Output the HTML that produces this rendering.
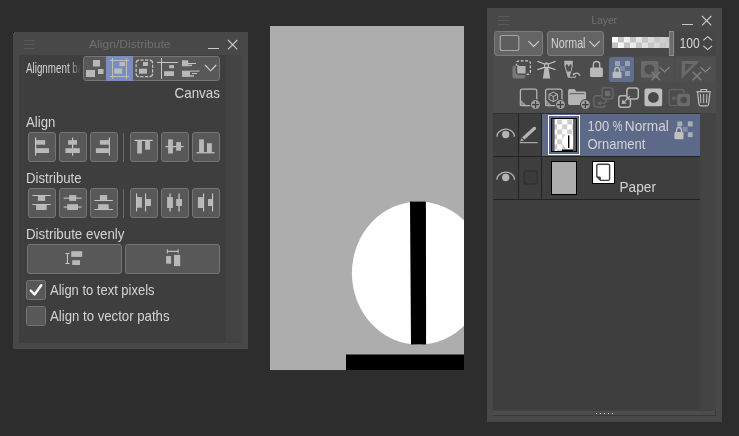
<!DOCTYPE html>
<html lang="en">
<head>
<meta charset="utf-8">
<title>Align/Distribute</title>
<style>
html,body{margin:0;padding:0;background:#2d2d2d;overflow:hidden;}
body{width:739px;height:436px;position:relative;font-family:"Liberation Sans",sans-serif;}
svg{position:absolute;left:0;top:0;display:block;will-change:transform;}
text{font-family:"Liberation Sans",sans-serif;font-size:14.1px;fill:#d4d4d4;}
.ttl{font-size:11.5px;fill:#707070;}
.ic{fill:#b8b8b8;}
.ln{fill:#c6c6c6;}
.btn{fill:#585858;stroke:#757575;stroke-width:1;}
</style>
</head>
<body>
<svg width="739" height="436" viewBox="0 0 739 436">
<defs>
  <pattern id="chk6" x="612" y="37" width="12" height="11" patternUnits="userSpaceOnUse">
    <rect x="0" y="0" width="12" height="11" fill="#c2c2c2"/>
    <rect x="0" y="0" width="6" height="5.5" fill="#ffffff"/>
    <rect x="6" y="5.5" width="6" height="5.5" fill="#ffffff"/>
  </pattern>
  <linearGradient id="opg" x1="0" x2="1" y1="0" y2="0">
    <stop offset="0" stop-color="#c8c8c8" stop-opacity="0"/>
    <stop offset="1" stop-color="#c8c8c8" stop-opacity="0.95"/>
  </linearGradient>
  <pattern id="chk4" x="557.2" y="119.4" width="10" height="10" patternUnits="userSpaceOnUse">
    <rect x="0" y="0" width="10" height="10" fill="#ffffff"/>
    <rect x="0" y="0" width="5" height="5" fill="#cecece"/>
    <rect x="5" y="5" width="5" height="5" fill="#cecece"/>
  </pattern>
  <linearGradient id="fade" x1="0" x2="1" y1="0" y2="0">
    <stop offset="0" stop-color="#3e3e3e" stop-opacity="0"/>
    <stop offset="1" stop-color="#3e3e3e" stop-opacity="1"/>
  </linearGradient>
  <clipPath id="cv"><rect x="270" y="26" width="194" height="344"/></clipPath>
  <clipPath id="th"><rect x="554.6" y="119" width="18.5" height="32"/></clipPath>
</defs>

<!-- ================= ALIGN / DISTRIBUTE PANEL ================= -->
<g id="align-panel">
  <rect x="13" y="32" width="235" height="317" fill="#484848"/>
  <rect x="13" y="32" width="1" height="1" fill="#000000"/>
  <rect x="19" y="55" width="223" height="288" fill="#3e3e3e"/>
  <rect x="226" y="55" width="16" height="287" fill="#434343"/>
  <!-- title bar -->
  <g fill="#5a5a5a"><rect x="24" y="40" width="11" height="1"/><rect x="24" y="44" width="11" height="1"/><rect x="24" y="48" width="11" height="1"/></g>
  <text class="ttl" x="89" y="48" textLength="81.5" lengthAdjust="spacingAndGlyphs">Align/Distribute</text>
  <rect x="208" y="48" width="11" height="1" fill="#c8c8c8"/>
  <path d="M228 40 L237.3 49.3 M237.3 40 L228 49.3" stroke="#c8c8c8" stroke-width="1.1" fill="none"/>

  <!-- alignment base row -->
  <text x="26" y="73" textLength="67.6" lengthAdjust="spacingAndGlyphs" fill="#ececec">Alignment base</text>
  <rect x="69" y="58" width="12" height="22" fill="url(#fade)"/>
  <rect x="81" y="58" width="14" height="22" fill="#3e3e3e"/>
  <rect x="83.5" y="56.5" width="136" height="24" rx="2.5" class="btn"/>
  <rect x="106" y="56" width="27" height="25" fill="#7a8cc0"/>
  <!-- icon 1 -->
  <g class="ic"><rect x="93" y="60" width="7" height="6.5"/><rect x="86" y="70" width="9" height="7"/><rect x="98" y="69" width="5.5" height="5"/></g>
  <!-- icon 2 (selected) -->
  <g fill="#bcbcbc"><rect x="112" y="58" width="1" height="21"/><rect x="126" y="58" width="1" height="21"/><rect x="110" y="60" width="19" height="1"/><rect x="110" y="76" width="19" height="1"/>
    <rect x="119.4" y="62" width="5.6" height="4"/><rect x="114.3" y="68.5" width="7.7" height="5.2"/></g>
  <!-- icon 3 -->
  <rect x="136.1" y="60.2" width="16.5" height="16.5" rx="3" fill="none" stroke="#c6c6c6" stroke-width="1.2" stroke-dasharray="4.71 1.4 3.1 1.5 3.1 1.4" stroke-dashoffset="4.71"/>
  <g class="ic"><rect x="143" y="62" width="5" height="4"/><rect x="139" y="68.7" width="8" height="5"/></g>
  <!-- icon 4 -->
  <g class="ln"><rect x="161" y="58" width="1" height="21"/><rect x="157" y="62" width="21" height="1"/></g>
  <g class="ic"><rect x="169.2" y="65.1" width="4.8" height="3.1"/><rect x="164.1" y="71.2" width="9.9" height="4.8"/></g>
  <!-- icon 5 -->
  <g class="ic"><rect x="182" y="60.3" width="6.2" height="5.8"/><rect x="182" y="64.6" width="10" height="1.6"/><rect x="182" y="70.7" width="8" height="6"/><rect x="182" y="75.2" width="12" height="1.5"/></g>
  <g class="ln"><rect x="188" y="63" width="8" height="1"/><rect x="190" y="70.6" width="9.5" height="1"/><rect x="192" y="73" width="5" height="1"/></g>
  <!-- chevron -->
  <path d="M205 65 L210.6 70.8 L216.2 65" stroke="#d0d0d0" stroke-width="1.1" fill="none"/>

  <text x="220" y="98" text-anchor="end" textLength="45.5" lengthAdjust="spacingAndGlyphs">Canvas</text>

  <!-- Align -->
  <text x="26" y="127" textLength="29.4" lengthAdjust="spacingAndGlyphs">Align</text>
  <g id="align-btns">
    <rect x="28.5" y="132.5" width="27" height="29" rx="2.5" class="btn"/>
    <rect x="59.5" y="132.5" width="27" height="29" rx="2.5" class="btn"/>
    <rect x="90.5" y="132.5" width="27" height="29" rx="2.5" class="btn"/>
    <rect x="123" y="133" width="1" height="29" fill="#6a6a6a"/>
    <rect x="130.5" y="132.5" width="27" height="29" rx="2.5" class="btn"/>
    <rect x="161.5" y="132.5" width="27" height="29" rx="2.5" class="btn"/>
    <rect x="192.5" y="132.5" width="27" height="29" rx="2.5" class="btn"/>
  </g>
  <!-- a1 left -->
  <rect class="ln" x="35" y="137.6" width="1.2" height="18"/>
  <g class="ic"><rect x="36" y="140.1" width="9.2" height="4.6"/><rect x="36" y="148.2" width="13" height="4.8"/></g>
  <!-- a2 center -->
  <rect class="ln" x="72" y="137.6" width="1.2" height="18"/>
  <g class="ic"><rect x="68.1" y="140.1" width="8.9" height="4.6"/><rect x="65.4" y="148.2" width="14.4" height="4.8"/></g>
  <!-- a3 right -->
  <rect class="ln" x="108.8" y="137.6" width="1.2" height="18"/>
  <g class="ic"><rect x="99.9" y="140.1" width="9" height="4.6"/><rect x="95.9" y="148.2" width="13" height="4.8"/></g>
  <!-- a4 top -->
  <rect class="ln" x="134.5" y="139.8" width="18.2" height="1.2"/>
  <g class="ic"><rect x="137.2" y="140.5" width="4.7" height="13"/><rect x="145.1" y="140.5" width="5" height="9.2"/></g>
  <!-- a5 middle -->
  <rect class="ln" x="165.4" y="146" width="18.2" height="1.2"/>
  <g class="ic"><rect x="168.1" y="139.4" width="4.8" height="14.1"/><rect x="176.2" y="142.1" width="4.8" height="8.6"/></g>
  <!-- a6 bottom -->
  <rect class="ln" x="196.4" y="152.2" width="18.2" height="1.2"/>
  <g class="ic"><rect x="199.1" y="139.4" width="4.8" height="13.3"/><rect x="207" y="143.2" width="4.9" height="9.5"/></g>

  <!-- Distribute -->
  <text x="26" y="183" textLength="55.5" lengthAdjust="spacingAndGlyphs">Distribute</text>
  <g id="dist-btns">
    <rect x="28.5" y="188.5" width="27" height="29" rx="2.5" class="btn"/>
    <rect x="59.5" y="188.5" width="27" height="29" rx="2.5" class="btn"/>
    <rect x="90.5" y="188.5" width="27" height="29" rx="2.5" class="btn"/>
    <rect x="123" y="189" width="1" height="29" fill="#6a6a6a"/>
    <rect x="130.5" y="188.5" width="27" height="29" rx="2.5" class="btn"/>
    <rect x="161.5" y="188.5" width="27" height="29" rx="2.5" class="btn"/>
    <rect x="192.5" y="188.5" width="27" height="29" rx="2.5" class="btn"/>
  </g>
  <!-- d1 -->
  <g class="ln"><rect x="32.4" y="195" width="18.4" height="1"/><rect x="32.4" y="204" width="18.4" height="1"/></g>
  <g class="ic"><rect x="37.9" y="195.6" width="7.3" height="5.3"/><rect x="36.1" y="204.6" width="10.6" height="5.4"/></g>
  <!-- d2 -->
  <g class="ln"><rect x="63.7" y="197.6" width="17.9" height="1.1"/><rect x="63.7" y="206.5" width="17.9" height="1.1"/></g>
  <g class="ic"><rect x="69.2" y="195.1" width="7" height="5.8"/><rect x="67.2" y="204.2" width="10.8" height="5.8"/></g>
  <!-- d3 -->
  <g class="ln"><rect x="94.4" y="200" width="18.4" height="1"/><rect x="94.4" y="209" width="18.4" height="1"/></g>
  <g class="ic"><rect x="99.9" y="195.1" width="7.3" height="5.2"/><rect x="98.1" y="204.2" width="10.6" height="5.2"/></g>
  <!-- d4 -->
  <g class="ln"><rect x="136" y="193.4" width="1.1" height="18.1"/><rect x="145" y="193.4" width="1.1" height="18.1"/></g>
  <g class="ic"><rect x="136.8" y="197.1" width="5.1" height="10.6"/><rect x="145.8" y="199" width="5.2" height="7"/></g>
  <!-- d5 -->
  <g class="ln"><rect x="169.4" y="193.4" width="1.3" height="18.1"/><rect x="178.4" y="193.4" width="1.3" height="18.1"/></g>
  <g class="ic"><rect x="167.1" y="197.1" width="5.8" height="10.9"/><rect x="176.2" y="199" width="5.8" height="7"/></g>
  <!-- d6 -->
  <g class="ln"><rect x="203" y="193.4" width="1.1" height="18.1"/><rect x="212" y="193.4" width="1.1" height="18.1"/></g>
  <g class="ic"><rect x="197.9" y="197.1" width="5.4" height="10.9"/><rect x="208" y="199" width="4.4" height="7"/></g>

  <!-- Distribute evenly -->
  <text x="26" y="239" textLength="98.5" lengthAdjust="spacingAndGlyphs">Distribute evenly</text>
  <rect x="27.5" y="244.5" width="94" height="29" rx="2.5" class="btn"/>
  <rect x="125.5" y="244.5" width="94" height="29" rx="2.5" class="btn"/>
  <g class="ln"><rect x="66.9" y="253.4" width="1.1" height="10.3"/><rect x="65.4" y="253" width="4.1" height="1"/><rect x="65.4" y="263" width="4.1" height="1"/></g>
  <g class="ic"><rect x="71.2" y="251.2" width="11" height="5.7"/><rect x="72.2" y="260.2" width="7.8" height="4.8"/></g>
  <g class="ln"><rect x="167.2" y="250.8" width="10.9" height="1.1"/><rect x="166.8" y="249.3" width="1" height="4.1"/><rect x="177.6" y="249.3" width="1" height="4.1"/></g>
  <g class="ic"><rect x="166.1" y="256.1" width="5" height="7.6"/><rect x="174" y="254.9" width="6.2" height="11.2"/></g>

  <!-- checkboxes -->
  <rect x="26.5" y="280.5" width="19" height="19" rx="2" class="btn"/>
  <path d="M30.8 290.6 L34.6 294.4 L41.2 285.2" stroke="#f4f4f4" stroke-width="2.5" stroke-linecap="round" stroke-linejoin="round" fill="none"/>
  <text x="50" y="295.3" textLength="104.5" lengthAdjust="spacingAndGlyphs" fill="#e2e2e2">Align to text pixels</text>
  <rect x="26.5" y="306.5" width="19" height="19" rx="2" class="btn"/>
  <text x="50" y="321.3" textLength="119.5" lengthAdjust="spacingAndGlyphs" fill="#e2e2e2">Align to vector paths</text>
</g>

<!-- ================= CANVAS ================= -->
<g id="canvas">
  <rect x="270" y="26" width="194" height="344" fill="#adadad"/>
  <g clip-path="url(#cv)">
    <ellipse cx="418.7" cy="273.1" rx="66.8" ry="71.6" fill="#ffffff"/>
    <path d="M410 201.6 L425.9 201.6 L426.1 344.5 L411 344.5 Z" fill="#000000"/>
    <rect x="346" y="354.5" width="118" height="16" fill="#000000"/>
  </g>
</g>

<!-- ================= LAYER PANEL ================= -->
<g id="layer-panel">
  <rect x="487" y="8" width="235" height="414" fill="#484848"/>
  <rect x="493" y="56" width="223" height="57" fill="#4c4c4c"/>
  <!-- title -->
  <g fill="#5a5a5a"><rect x="498" y="16" width="11" height="1"/><rect x="498" y="20" width="11" height="1"/><rect x="498" y="24" width="11" height="1"/></g>
  <text class="ttl" x="591.5" y="24" textLength="25.5" lengthAdjust="spacingAndGlyphs">Layer</text>
  <rect x="682" y="24" width="11" height="1" fill="#c8c8c8"/>
  <path d="M702 16 L711.3 25.3 M711.3 16 L702 25.3" stroke="#c8c8c8" stroke-width="1.1" fill="none"/>

  <!-- row 1 : dropdowns, opacity -->
  <rect x="494.5" y="31.5" width="48" height="24" rx="2.5" fill="#646464" stroke="#7c7c7c"/>
  <rect x="500.2" y="35.5" width="18.6" height="15" rx="2" fill="#5e5e5e" stroke="#a4a4a4" stroke-width="1.2"/>
  <path d="M528.4 41.2 L533.7 46.4 L539 41.2" stroke="#d0d0d0" stroke-width="1.1" fill="none"/>
  <rect x="547.5" y="31.5" width="56" height="24" rx="2.5" fill="#646464" stroke="#7c7c7c"/>
  <text x="551" y="47.7" textLength="34.5" lengthAdjust="spacingAndGlyphs" fill="#e0e0e0">Normal</text>
  <path d="M589.3 41.2 L594.5 46.4 L599.7 41.2" stroke="#d0d0d0" stroke-width="1.1" fill="none"/>
  <rect x="675" y="31" width="41" height="25" fill="#454545"/>
  <rect x="612" y="37" width="57" height="11" fill="url(#chk6)"/>
  <rect x="612" y="37" width="57" height="11" fill="url(#opg)"/>
  <rect x="669.5" y="31.5" width="4" height="24" fill="#6c6c6c" stroke="#8c8c8c"/>
  <text x="679.5" y="47.7" textLength="20.3" lengthAdjust="spacingAndGlyphs" fill="#e0e0e0">100</text>
  <path d="M703.3 40.3 L707.7 36.6 L712.1 40.3 M703.3 45.8 L707.7 49.6 L712.1 45.8" stroke="#d0d0d0" stroke-width="1.1" fill="none"/>

  <!-- row 2 : toggle icons -->
  <!-- clip to layer below -->
  <rect x="512.5" y="65.6" width="12.9" height="13" rx="2" fill="#787878"/>
  <rect x="515.7" y="60.2" width="15.4" height="14.8" rx="3.4" fill="#4c4c4c"/>
  <path d="M517.2 65 L518.8 65 L518.8 66 L525.6 66 L525.6 73.6 L518.6 73.6 Q517.2 73.6 517.2 72.2 Z" fill="#b2b2b2"/>
  <path d="M516.4 65.4 L516.4 63.6 Q516.4 60.8 519.2 60.8 L527.6 60.8 Q530.4 60.8 530.4 63.6 L530.4 71.4 Q530.4 74.3 527.4 74.3 L526.6 74.3" fill="none" stroke="#d0d0d0" stroke-width="1.2" stroke-dasharray="2.7 1.7" stroke-dashoffset="1"/>
  <!-- lighthouse (reference layer) -->
  <g>
    <path d="M544.7 67.3 L548.4 67.3 L550.2 78.5 L542.8 78.5 Z" fill="#b8b8b8"/>
    <rect x="544.7" y="63.9" width="3.6" height="3.4" fill="none" stroke="#c2c2c2" stroke-width="1.1"/>
    <path d="M544.4 63.6 L546.5 62 L548.6 63.6 Z" fill="#c2c2c2"/>
    <path d="M544.4 64 L537.9 61.5 M544.4 67.3 L537.9 69.5 M548.6 64 L555.1 61.5 M548.6 67.3 L555.1 69.5" stroke="#c8c8c8" stroke-width="1.3" fill="none" stroke-linecap="round"/>
  </g>
  <!-- draft layer (pencil tip + arrow) -->
  <g>
    <path d="M564.3 60.8 L572.8 60.8 L572.6 67 L570.8 73 L569.6 77.6 L567.8 77.6 L565.6 70 L564.4 66 Z" fill="#b4b4b4"/>
    <path d="M565.4 66 L566.4 64.2 L567.6 64.4 L568.8 66.8 L570 64.2 L571.2 64.2 L571.7 66 L570.6 71.6 L567 71.6 Z" fill="#505050"/>
    <path d="M568.8 77.3 L575.2 77.3 L575.6 75.6" stroke="#b8b8b8" stroke-width="1.1" fill="none"/>
    <path d="M574 74.4 Q577 71.4 580.2 75.6" stroke="#b8b8b8" stroke-width="1.2" fill="none"/>
    <path d="M572.6 73.2 L575.6 73.4 L573.2 76 Z" fill="#b8b8b8"/>
  </g>
  <!-- lock -->
  <g>
    <rect x="590" y="67.4" width="12.9" height="9.7" rx="1.6" fill="#b8b8b8"/>
    <path d="M593.4 68 L593.4 64.8 A3.15 3.3 0 0 1 599.7 64.8 L599.7 68" fill="none" stroke="#b8b8b8" stroke-width="1.4"/>
  </g>
  <!-- lock transparent pixels (selected) -->
  <g>
    <rect x="609" y="57" width="25" height="25" rx="2.5" fill="#616e8c"/>
    <g fill="#9aa1b3"><rect x="615" y="61" width="5" height="5"/><rect x="625" y="61" width="5" height="5"/><rect x="625" y="71" width="5" height="5"/></g>
    <rect x="620" y="66" width="5" height="5" fill="#8088a0"/>
    <rect x="612.6" y="71.7" width="8.9" height="6.4" rx="1.2" fill="#bcbcbc"/>
    <path d="M614.8 72 L614.8 70 A2.3 2.6 0 0 1 619.4 70 L619.4 72" fill="none" stroke="#bcbcbc" stroke-width="1.3"/>
  </g>
  <!-- mask enable (disabled) -->
  <g>
    <rect x="635" y="57" width="39" height="25" rx="2.5" fill="#4f4f4f"/>
    <rect x="641" y="61" width="17.5" height="16.8" rx="2" fill="#6a6a6a"/>
    <circle cx="649.3" cy="69.4" r="5" fill="#4e4e4e"/>
    <path d="M651.6 71.8 L660 80.2 M660 71.8 L651.6 80.2" stroke="#7c7c7c" stroke-width="1.6" fill="none"/>
    <path d="M659.6 67.2 L664.5 71.8 L669.6 67.2" stroke="#a8a8a8" stroke-width="1" fill="none"/>
  </g>
  <!-- ruler (disabled) -->
  <g>
    <rect x="675" y="57" width="40" height="25" rx="2.5" fill="#4f4f4f"/>
    <path d="M681.7 60.9 L699.4 60.9 L681.7 78.8 Z M685 63.9 L685 71.7 L692.8 63.9 Z" fill="#6a6a6a" fill-rule="evenodd"/>
    <path d="M692.6 71.8 L701.2 80.2 M701.2 71.8 L692.6 80.2" stroke="#7c7c7c" stroke-width="1.6" fill="none"/>
    <path d="M700.4 67.2 L705.5 71.8 L710.5 67.2" stroke="#a8a8a8" stroke-width="1" fill="none"/>
  </g>

  <!-- row 3 : command icons -->
  <!-- new raster layer -->
  <g>
    <rect x="520.4" y="89.2" width="16.4" height="16.4" rx="2" fill="none" stroke="#b4b4b4" stroke-width="1.3"/>
    <path d="M520.4 100 L526 105.6 L520.4 105.6 Z" fill="#8c8c8c" stroke="#b4b4b4" stroke-width="0.8"/>
    <circle cx="535.5" cy="104.6" r="5.5" fill="#4c4c4c"/>
    <circle cx="535.5" cy="104.6" r="4.5" fill="#9e9e9e"/>
    <path d="M532.2 104.6 L538.8 104.6 M535.5 101.3 L535.5 107.9" stroke="#3e3e3e" stroke-width="1.2"/>
  </g>
  <!-- new vector layer -->
  <g>
    <rect x="545.6" y="89.2" width="16.4" height="16.4" rx="2" fill="none" stroke="#b4b4b4" stroke-width="1.3"/>
    <path d="M545.6 100 L551.2 105.6 L545.6 105.6 Z" fill="#8c8c8c" stroke="#b4b4b4" stroke-width="0.8"/>
    <path d="M553.3 92.2 L557.6 94.3 L557.6 99.4 L553.3 101.6 L549 99.4 L549 94.3 Z M549 94.3 L553.3 96.5 L557.6 94.3 M553.3 96.5 L553.3 101.6" fill="none" stroke="#b4b4b4" stroke-width="1"/>
    <circle cx="560.5" cy="104.6" r="5.5" fill="#4c4c4c"/>
    <circle cx="560.5" cy="104.6" r="4.5" fill="#9e9e9e"/>
    <path d="M557.2 104.6 L563.8 104.6 M560.5 101.3 L560.5 107.9" stroke="#3e3e3e" stroke-width="1.2"/>
  </g>
  <!-- new folder -->
  <g>
    <path d="M568.1 90.6 Q568.1 89.1 569.6 89.1 L574.4 89.1 L576.4 91.6 L584.6 91.6 Q586 91.6 586 93 L586 103.6 Q586 105 584.6 105 L569.6 105 Q568.1 105 568.1 103.6 Z" fill="#b4b4b4"/>
    <rect x="569.6" y="93.2" width="15" height="1" fill="#5a5a5a"/>
    <circle cx="585.4" cy="104.6" r="5.5" fill="#4c4c4c"/>
    <circle cx="585.4" cy="104.6" r="4.5" fill="#9e9e9e"/>
    <path d="M582.1 104.6 L588.7 104.6 M585.4 101.3 L585.4 107.9" stroke="#3e3e3e" stroke-width="1.2"/>
  </g>
  <!-- transfer to lower layer (disabled) -->
  <g>
    <rect x="593.9" y="95.8" width="11.4" height="11.2" rx="2.4" fill="none" stroke="#686868" stroke-width="1.4"/>
    <rect x="602" y="87.9" width="11" height="11" rx="2.4" fill="#4c4c4c" stroke="#686868" stroke-width="1.4"/>
    <rect x="605" y="91" width="5.2" height="5.2" fill="#6c6c6c"/>
    <rect x="604.4" y="100.4" width="2" height="4.6" fill="#4c4c4c"/>
    <path d="M606.6 99.8 Q606.8 103.2 603 103.2 L599.6 103.2" fill="none" stroke="#686868" stroke-width="1.3"/>
    <path d="M597.2 103.2 L600.6 100.6 L600.6 105.8 Z" fill="#686868"/>
  </g>
  <!-- merge with layer below -->
  <g>
    <rect x="618.8" y="95.8" width="11.6" height="11.4" rx="2.4" fill="none" stroke="#b4b4b4" stroke-width="1.5"/>
    <rect x="626.9" y="87.9" width="11.4" height="11" rx="2.4" fill="#4c4c4c" stroke="#b4b4b4" stroke-width="1.5"/>
    <path d="M629.8 96.3 L624.6 101.6" stroke="#b4b4b4" stroke-width="1.3" fill="none"/>
    <path d="M621.7 104.1 L622.5 99.6 L626.6 103.4 Z" fill="#b8b8b8"/>
  </g>
  <!-- create layer mask -->
  <g>
    <rect x="644.5" y="88.6" width="17.7" height="17.7" rx="2" fill="#bdbdbd"/>
    <circle cx="653.4" cy="97.4" r="5.4" fill="#484848"/>
  </g>
  <!-- apply mask (disabled) -->
  <g>
    <path d="M684 93 L684 91.4 Q684 89.7 682.3 89.7 L670.9 89.7 Q669.2 89.7 669.2 91.4 L669.2 103.8 Q669.2 105.5 670.9 105.5 L677 105.5" fill="none" stroke="#666666" stroke-width="1.2"/>
    <rect x="677.2" y="93.7" width="12.8" height="12.6" rx="2.2" fill="#6a6a6a"/>
    <circle cx="683.7" cy="100" r="3.3" fill="#4c4c4c"/>
    <path d="M671.3 98.2 L674.4 95.8 L674.4 100.6 Z" fill="#666666"/>
    <rect x="674" y="97.6" width="3.4" height="1.2" fill="#666666"/>
  </g>
  <!-- trash -->
  <g fill="none" stroke="#c0c0c0" stroke-width="1.2">
    <path d="M701 91.2 L701 89.5 L706.6 89.5 L706.6 91.2"/>
    <path d="M696.4 91.7 L710.8 91.7"/>
    <path d="M697.6 92.2 L699 104.2 Q699.2 105.8 700.8 105.8 L706.8 105.8 Q708.4 105.8 708.6 104.2 L710 92.2"/>
    <path d="M700.5 94 L700.9 103.2 M703.7 94 L703.7 103.2 M706.9 94 L706.5 103.2" stroke-width="1"/>
  </g>

  <!-- layer list -->
  <rect x="493" y="113" width="207" height="297" fill="#3e3e3e"/>
  <rect x="700" y="113" width="16" height="297" fill="#444444"/>
  <!-- selected row -->
  <rect x="493" y="113" width="207" height="1" fill="#303030"/>
  <rect x="542" y="114" width="158" height="42" fill="#5c6989"/>
  <rect x="493" y="156" width="207" height="1" fill="#232323"/>
  <rect x="493" y="199" width="207" height="1" fill="#232323"/>
  <rect x="518" y="113" width="1" height="87" fill="#232323"/>
  <rect x="541" y="113" width="1" height="87" fill="#232323"/>
  <!-- eyes -->
  <g id="eye1">
    <path d="M497.4 136.8 C496 134 500 129.2 505.7 129.2 C511.4 129.2 515.4 134 514 136.8" fill="none" stroke="#b4b4b4" stroke-width="1.3"/>
    <circle cx="505.7" cy="134.5" r="3.7" fill="#b4b4b4"/>
  </g>
  <g id="eye2">
    <path d="M497.4 179.8 C496 177 500 172.2 505.7 172.2 C511.4 172.2 515.4 177 514 179.8" fill="none" stroke="#b4b4b4" stroke-width="1.3"/>
    <circle cx="505.7" cy="177.5" r="3.7" fill="#b4b4b4"/>
  </g>
  <!-- pencil -->
  <g>
    <path d="M533.4 127 Q534.8 126.2 535.8 127.4 Q536.6 128.6 535.6 129.6 L524.6 139.6 L522 137.4 Z" fill="#b4b4b4"/>
    <path d="M521.4 138.2 L523.8 140.4 L520.2 141.6 Z" fill="#b4b4b4"/>
    <rect x="519.8" y="142.1" width="17.8" height="1.1" fill="#b4b4b4"/>
  </g>
  <!-- empty lock box row 2 -->
  <rect x="523.9" y="170.9" width="13.2" height="13.2" rx="3" fill="#3b3b3b" stroke="#303030" stroke-width="1.4"/>
  <!-- thumbnail 1 -->
  <rect x="548.5" y="115.5" width="31" height="39" fill="none" stroke="#ffffff" stroke-width="1"/>
  <rect x="551" y="118" width="26" height="34" fill="#000000"/>
  <rect x="552" y="119" width="24" height="32" fill="#5a5a5a"/>
  <rect x="554.6" y="119" width="18.5" height="32" fill="url(#chk4)"/>
  <g clip-path="url(#th)">
    <ellipse cx="569.3" cy="141.3" rx="6.9" ry="7.6" fill="#ffffff"/>
    <rect x="568" y="135.4" width="1.4" height="12.6" fill="#000000"/>
    <rect x="562" y="149.5" width="12" height="2" fill="#000000"/>
  </g>
  <text y="131" fill="#e4e4e4"><tspan x="587.5" textLength="21.6" lengthAdjust="spacingAndGlyphs">100</tspan><tspan x="609.4" textLength="3.4" lengthAdjust="spacingAndGlyphs"> </tspan><tspan x="612.8" textLength="9.8" lengthAdjust="spacingAndGlyphs">%</tspan><tspan x="622.4" textLength="2.4" lengthAdjust="spacingAndGlyphs"> </tspan><tspan x="624.8" textLength="44" lengthAdjust="spacingAndGlyphs">Normal</tspan></text>
  <text x="587.5" y="149" textLength="57.8" lengthAdjust="spacingAndGlyphs" fill="#e4e4e4">Ornament</text>
  <!-- row lock-transparency icon -->
  <g>
    <g fill="#a6acba"><rect x="677.3" y="121.4" width="4.9" height="5"/><rect x="687.8" y="121.4" width="4.9" height="5"/><rect x="687.8" y="132.2" width="4.9" height="4.9"/></g>
    <rect x="682.6" y="126.8" width="4.9" height="5" fill="#868ea5"/>
    <rect x="674.4" y="132" width="9.1" height="7.3" rx="1.2" fill="#c0c0c0"/>
    <path d="M676.6 132.4 L676.6 130.2 A2.4 2.7 0 0 1 681.4 130.2 L681.4 132.4" fill="none" stroke="#c0c0c0" stroke-width="1.3"/>
  </g>
  <!-- paper row -->
  <rect x="551.5" y="161.5" width="25" height="33" fill="#adadad" stroke="#000000" stroke-width="1"/>
  <rect x="592.5" y="161.5" width="22" height="22" fill="#ffffff" stroke="#000000" stroke-width="1"/>
  <path d="M598.2 164.2 L608.2 164.2 Q609.6 164.2 609.6 165.6 L609.6 179 Q609.6 180.4 608.2 180.4 L600.6 180.4 L596.8 176.8 L596.8 165.6 Q596.8 164.2 598.2 164.2 Z" fill="none" stroke="#404040" stroke-width="1.4"/>
  <path d="M596.8 176.4 L599.6 176.4 Q600.8 176.4 600.8 177.6 L600.8 180.4 L600.2 180.4 L596.8 177.2 Z" fill="#404040"/>
  <text x="619.5" y="192" textLength="36.5" lengthAdjust="spacingAndGlyphs" fill="#cccccc">Paper</text>

  <!-- bottom grip bar -->
  <rect x="493" y="410" width="223" height="6" fill="#4c4c4c"/>
  <rect x="493" y="410" width="223" height="1" fill="#424242"/>
  <rect x="493" y="415" width="223" height="1" fill="#383838"/>
  <rect x="715" y="410" width="1" height="6" fill="#383838"/>
  <g fill="#d4d4d4"><rect x="596" y="413" width="1" height="1"/><rect x="600" y="413" width="1" height="1"/><rect x="604" y="413" width="1" height="1"/><rect x="608" y="413" width="1" height="1"/><rect x="612" y="413" width="1" height="1"/></g>
</g>
</svg>
</body>
</html>
